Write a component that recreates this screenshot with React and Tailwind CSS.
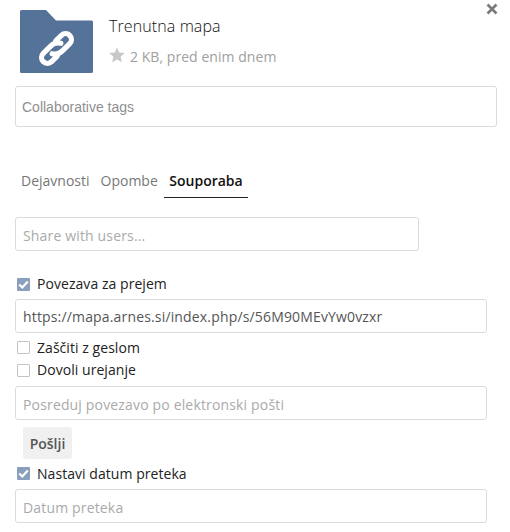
const open = { fontFamily: '"Open Sans", sans-serif' };

function Check({ checked }) {
  return checked ? (
    <span className="flex h-[13px] w-[13px] shrink-0 items-center justify-center rounded-[1px] bg-[#8a9fbc]">
      <svg width="11" height="11" viewBox="0 0 11 11" fill="none">
        <path d="M1.2 5.5 L4.3 8.4 L9.8 2.4" stroke="#fff" strokeWidth="2.2" />
      </svg>
    </span>
  ) : (
    <span className="h-[13px] w-[13px] shrink-0 rounded-[1px] border border-[#c4c4c4] bg-white" />
  );
}

function Row({ checked, label, cls, textCls }) {
  return (
    <div className={`flex h-[20px] items-center pl-[17px] text-[14px] leading-[20px] tracking-[0.05px] text-[#222] ${cls}`}>
      <Check checked={checked} />
      <span className={`ml-[7px] ${textCls || ""}`}>{label}</span>
    </div>
  );
}

function Field({ text, dark, cls }) {
  return (
    <div
      className={`flex h-[34px] items-center rounded-[3px] border border-[#dbdbdb] bg-white px-[7px] text-[14px] tracking-[0.16px] ${dark ? "text-[#555]" : "pt-[2px] text-[#aaa]"} ${cls}`}
    >
      {text}
    </div>
  );
}

export default function App() {
  return (
    <div className="relative h-[532px] w-[510px] overflow-hidden bg-white" style={open}>
      <svg className="absolute right-[12px] top-[3px]" width="12" height="12" viewBox="0 0 12 12">
        <path d="M1.5 1.5 L10.5 10.5 M10.5 1.5 L1.5 10.5" stroke="#7a7a7a" strokeWidth="2.6" />
      </svg>

      <div className="flex pl-[20px] pt-[10px]">
        <svg width="73" height="63" viewBox="0 0 73 63" className="shrink-0">
          <path
            d="M1.5 0 H26 L36 10.5 H71.5 Q73 10.5 73 12 V61.5 Q73 63 71.5 63 H1.5 Q0 63 0 61.5 V1.5 Q0 0 1.5 0 Z"
            fill="#557299"
          />
          <g transform="translate(36.5 38.5) rotate(-45) scale(1.22)" fill="none" stroke="#fff" strokeWidth="4.3" strokeLinecap="round" strokeLinejoin="round">
            <path d="M-5.5 0.5 Q-3 4.8 2 4.8 H10.5 A4.8 4.8 0 0 0 10.5 -4.8 H4" />
            <path d="M5.5 -0.5 Q3 -4.8 -2 -4.8 H-10.5 A4.8 4.8 0 0 0 -10.5 4.8 H-4" />
          </g>
        </svg>
        <div className="ml-[16px]">
          <div className="mt-[6px] text-[16px] font-light leading-[20px] tracking-[0.1px] text-[#111]">Trenutna mapa</div>
          <div className="mt-[10px] flex items-center text-[14px] leading-[20px] tracking-[0.05px] text-[#a0a0a0]">
            <svg width="16" height="16" viewBox="0 0 16 16" className="mr-[5px] -mt-[3px]">
              <path d="M8 0.5 L10.2 5.6 L15.8 6.1 L11.6 9.8 L12.9 15.3 L8 12.4 L3.1 15.3 L4.4 9.8 L0.2 6.1 L5.8 5.6 Z" fill="#c8c8c8" />
            </svg>
            <span className="mt-[1px]">2 KB, pred enim dnem</span>
          </div>
        </div>
      </div>

      <div
        className="ml-[15px] mt-[13px] flex h-[41px] w-[482px] items-center rounded-[3px] border border-[#dbdbdb] px-[6px] pt-[2px] text-[14px] text-[#8f8f8f]"
        style={{ fontFamily: '"Liberation Sans", sans-serif' }}
      >
        Collaborative tags
      </div>

      <div className="ml-[15px] mt-[37px] flex h-[34px] text-[14px]">
        <div className="flex items-center pl-[6px] pr-[5px] pb-[1px] text-[#777]">Dejavnosti</div>
        <div className="flex items-center px-[6px] pb-[1px] text-[#777]">Opombe</div>
        <div className="flex items-center border-b border-[#222] px-[5.5px] pb-[1px] font-semibold text-[#111]">Souporaba</div>
      </div>

      <Field text="Share with users..." cls="ml-[15px] mt-[19px] w-[404px]" />

      <Row checked label="Povezava za prejem" cls="mt-[23px]" />
      <Field dark text="https://mapa.arnes.si/index.php/s/56M90MEvYw0vzxr" cls="ml-[15px] mt-[5px] w-[472px]" />
      <Row label="Zaščiti z geslom" cls="mt-[4px]" textCls="mt-[2px]" />
      <Row label="Dovoli urejanje" cls="mt-[3px]" />
      <Field text="Posreduj povezavo po elektronski pošti" cls="ml-[15px] mt-[6px] w-[472px]" />
      <div className="ml-[23px] mt-[7px] flex h-[32px] w-[49px] items-center justify-center rounded-[3px] bg-[#f0f0f0] text-[14px] font-semibold text-[#555]">
        Pošlji
      </div>
      <Row checked label="Nastavi datum preteka" cls="mt-[4px]" textCls="mt-[2px]" />
      <Field text="Datum preteka" cls="ml-[15px] mt-[6px] w-[472px]" />
    </div>
  );
}
